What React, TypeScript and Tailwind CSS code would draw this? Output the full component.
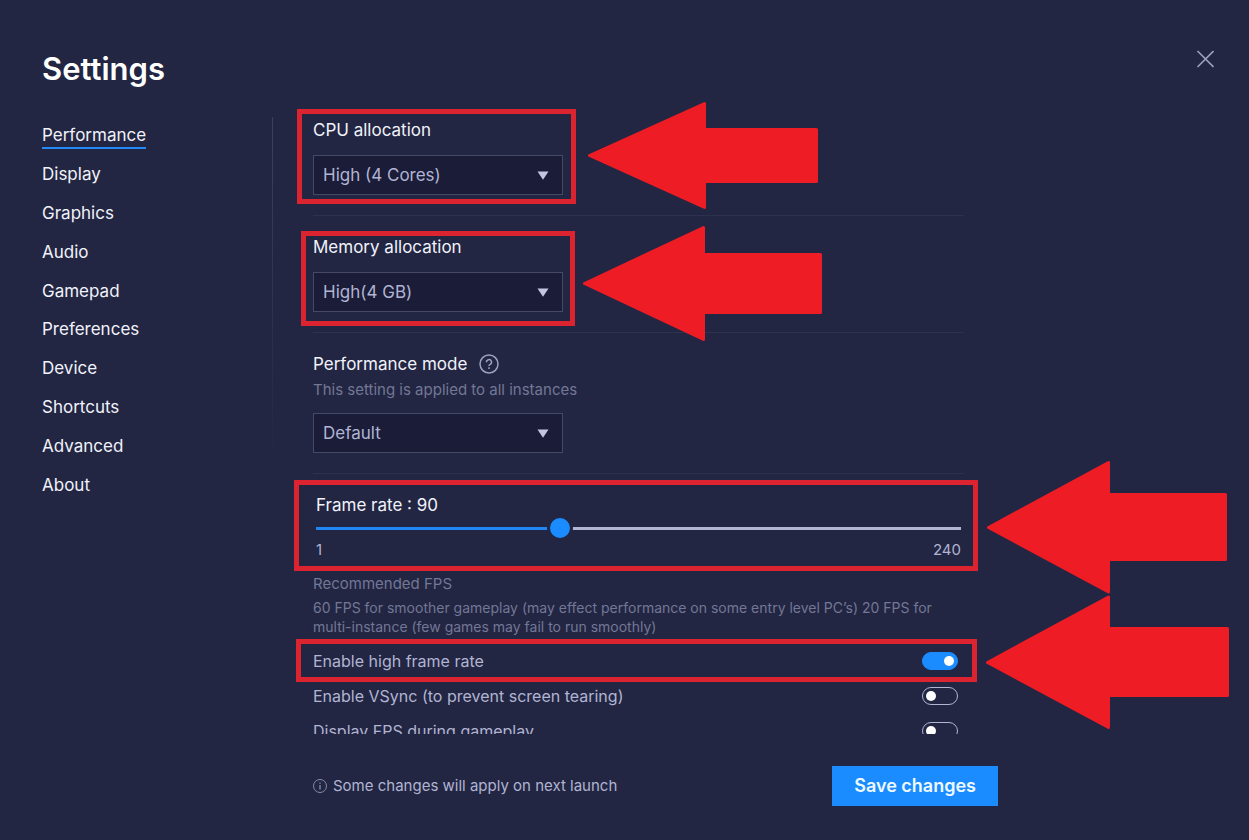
import { useState } from 'react';
import type { ReactNode } from 'react';

const NAV_ITEMS = [
  'Performance',
  'Display',
  'Graphics',
  'Audio',
  'Gamepad',
  'Preferences',
  'Device',
  'Shortcuts',
  'Advanced',
  'About',
];

const MIN_FPS = 1;
const MAX_FPS = 240;

interface SelectFieldProps {
  id: string;
  label: string;
  options: string[];
  hint?: string;
  icon?: ReactNode;
}

function SelectField({ id, label, options, hint, icon }: SelectFieldProps) {
  return (
    <section className="border-b border-[#2d3150] pb-5">
      <div className="flex items-center gap-3">
        <label htmlFor={id} className="text-[17px] leading-[26px] text-[#f1f2fb]">{label}</label>
        {icon}
      </div>
      {hint && <p className="pt-0.5 text-[15px] leading-[22px] text-[#737796]">{hint}</p>}
      <div className="relative mt-3 w-[250px]">
        <select
          id={id}
          className="h-10 w-full appearance-none border border-[#444966] bg-[#1a1c38] pl-[9px] pr-10 pt-0.5 text-[17px] text-[#b1b4d2] outline-none"
        >
          {options.map((option) => (
            <option key={option}>{option}</option>
          ))}
        </select>
        <svg viewBox="0 0 12 9" className="pointer-events-none absolute right-3.5 top-4 h-[9px] w-3" aria-hidden="true">
          <path d="M.5 .5h11L6 8.800z" fill="#c3c6e2" />
        </svg>
      </div>
    </section>
  );
}

interface ToggleRowProps {
  id: string;
  label: string;
  defaultChecked?: boolean;
}

function ToggleRow({ id, label, defaultChecked }: ToggleRowProps) {
  return (
    <div className="flex h-[35px] items-center justify-between pr-1.5">
      <label htmlFor={id} className="text-base text-[#b1b4d2]">{label}</label>
      <input
        id={id}
        type="checkbox"
        role="switch"
        defaultChecked={defaultChecked}
        className="flex h-[18px] w-9 appearance-none items-center rounded-full border border-[#b1b4d2] px-[3px] before:size-2.5 before:rounded-full before:bg-white checked:justify-end checked:border-[#1b8cff] checked:bg-[#1b8cff]"
      />
    </div>
  );
}

function FrameRate() {
  const [fps, setFps] = useState(90);
  const percent = ((fps - MIN_FPS) / (MAX_FPS - MIN_FPS)) * 100;

  return (
    <div className="px-[3px]">
      <label htmlFor="frame-rate" className="block text-[17px] leading-[26px] text-[#f1f2fb]">
        Frame rate : {fps}
      </label>
      <div className="flex h-5 items-center">
        <input
          id="frame-rate"
          type="range"
          min={MIN_FPS}
          max={MAX_FPS}
          value={fps}
          onChange={(e) => setFps(Number(e.target.value))}
          style={{ background: `linear-gradient(to right, #1f87f5 ${percent}%, #b1b4d2 ${percent}%)` }}
          className="h-[3px] w-full appearance-none outline-none [&::-webkit-slider-thumb]:size-[26px] [&::-webkit-slider-thumb]:appearance-none [&::-webkit-slider-thumb]:rounded-full [&::-webkit-slider-thumb]:border-3 [&::-webkit-slider-thumb]:border-[#222642] [&::-webkit-slider-thumb]:bg-[#1b8cff]"
        />
      </div>
      <div className="mt-0.5 flex justify-between text-[15px] leading-5 text-[#b1b4d2]">
        <span>{MIN_FPS}</span>
        <span>{MAX_FPS}</span>
      </div>
    </div>
  );
}

/* Red boxes and arrows that point at the settings to change */
function Highlights() {
  return (
    <svg
      width="1249"
      height="840"
      viewBox="0 0 1249 840"
      className="pointer-events-none absolute left-0 top-0 max-w-none"
      aria-hidden="true"
    >
      <g fill="none" stroke="#dc2431" strokeWidth="5">
        <rect x="299.5" y="111.5" width="274" height="90" />
        <rect x="303.5" y="233.5" width="269" height="90" />
        <rect x="296.5" y="482.5" width="679" height="86" />
        <rect x="298.5" y="641.5" width="676" height="38" />
      </g>
      <g fill="#ee1c24" stroke="#ee1c24" strokeWidth="3" strokeLinejoin="round">
        <path d="M589.5 155.5 704.5 103.5V129.5H816.5V181.5H704.5V207.5Z" />
        <path d="M584.5 283.5 703.5 227.5V254.5H820.5V312.5H703.5V339.5Z" />
        <path d="M988.5 527.5 1108.5 462.5V494.5H1225.5V559.5H1108.5V592Z" />
        <path d="M987.5 662.5 1108.5 597V628.5H1227.5V695.5H1108.5V727.5Z" />
      </g>
    </svg>
  );
}

export default function App() {
  const [active, setActive] = useState('Performance');

  return (
    <div className="relative flex h-screen flex-col overflow-hidden bg-[#222642] font-[Inter,sans-serif] text-[#f1f2fb]">
      <header className="flex h-[117px] shrink-0 items-start justify-between pl-[42px] pr-[35px] pt-[50px]">
        <h1 className="text-[31px] font-semibold leading-[38px] text-white">Settings</h1>
        <button type="button" aria-label="Close" className="size-[18px]">
          <svg viewBox="0 0 18 18" className="size-[18px]" fill="none" stroke="#9da1bf" strokeWidth="1.6">
            <path d="M1.5 1l16 16M17.500 1L1.500 17" />
          </svg>
        </button>
      </header>

      <div className="flex min-h-0 flex-1">
        <nav className="w-[272px] shrink-0 pl-[42px]">
          <ul className="flex h-[388px] flex-col">
            {NAV_ITEMS.map((item) => (
              <li key={item} className="flex flex-1 items-center">
                <a
                  href={`#${item.toLowerCase()}`}
                  onClick={() => setActive(item)}
                  className={
                    item === active
                      ? 'border-b-2 border-[#2389f7] text-[17px] leading-6'
                      : 'border-b-2 border-transparent text-[17px] leading-6'
                  }
                >
                  {item}
                </a>
              </li>
            ))}
          </ul>
        </nav>
        <div className="h-[350px] w-px shrink-0 bg-linear-to-b from-[#3c4160] to-[#222642]" />

        <div className="flex min-w-0 max-w-[725px] flex-1 flex-col pl-10">
          <main className="mr-[34px] flex min-h-0 flex-1 flex-col gap-[18px] overflow-hidden">
            <SelectField id="cpu" label="CPU allocation" options={['High (4 Cores)', 'Medium (2 Cores)', 'Low (1 Core)']} />
            <SelectField id="memory" label="Memory allocation" options={['High(4 GB)', 'Medium(2 GB)', 'Low(1 GB)']} />
            <SelectField
              id="mode"
              label="Performance mode"
              hint="This setting is applied to all instances"
              options={['Default', 'Low memory', 'High performance']}
              icon={
                <svg viewBox="0 0 20 20" className="size-5" fill="none" stroke="#9da1bf" strokeWidth="1.5" aria-hidden="true">
                  <circle cx="10" cy="10" r="9" />
                  <path d="M7.5 8.2a2.5 2.5 0 1 1 3.7 2.1c-.8.4-1.2.8-1.2 1.7" />
                  <path d="M10 13.3v1.6" />
                </svg>
              }
            />

            <section className="shrink-0">
              <FrameRate />
              <div className="mt-3.5 text-[#737796]">
                <h2 className="text-[15px] leading-5">Recommended FPS</h2>
                <p className="mt-1 text-sm leading-[19px]">
                  60 FPS for smoother gameplay (may effect performance on some entry level PC’s) 20 FPS for
                  multi-instance (few games may fail to run smoothly)
                </p>
              </div>
              <div className="mt-[7px]">
                <ToggleRow id="high-fps" label="Enable high frame rate" defaultChecked />
                <ToggleRow id="vsync" label="Enable VSync (to prevent screen tearing)" />
                <ToggleRow id="show-fps" label="Display FPS during gameplay" />
              </div>
            </section>
          </main>

          <footer className="flex shrink-0 items-center justify-between pb-[34px] pt-8">
            <p className="flex items-center gap-1.5 text-[15px] text-[#b1b4d2]">
              <svg viewBox="0 0 14 14" className="size-3.5" fill="none" stroke="#858aa8" aria-hidden="true">
                <circle cx="7" cy="7" r="6.5" />
                <path d="M7 6v4.5M7 3.5v1.3" strokeWidth="1.3" />
              </svg>
              Some changes will apply on next launch
            </p>
            <button type="button" className="h-10 bg-[#1b8cff] px-[22px] text-lg font-semibold text-[#eefaff]">
              Save changes
            </button>
          </footer>
        </div>
      </div>

      <Highlights />
    </div>
  );
}
